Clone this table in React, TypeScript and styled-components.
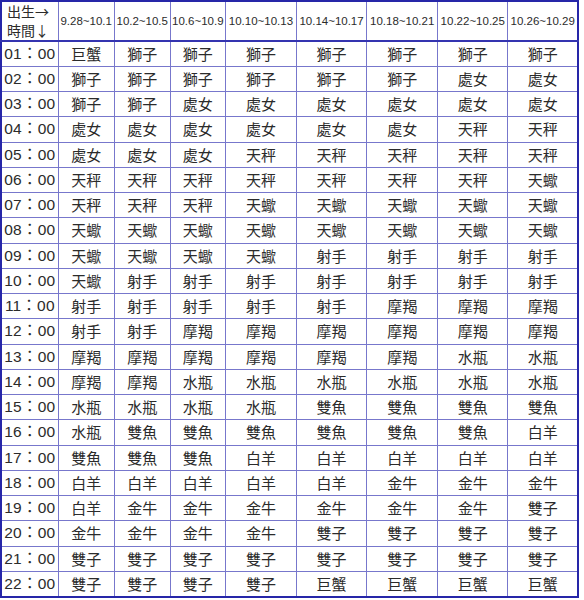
import styled, { createGlobalStyle } from "styled-components";

const GlobalStyle = createGlobalStyle`
  html, body {
    margin: 0;
    padding: 0;
    background: #ffffff;
  }
  body {
    font-family: "Liberation Sans", "Noto Sans CJK TC", sans-serif;
    color: #2b2b2b;
  }
`;

const Table = styled.table`
  table-layout: fixed;
  border-collapse: collapse;
  width: 579px;
  border: 2px solid #2626a8;
`;

const HeadRow = styled.tr`
  height: 39px;
  border-bottom: 2px solid #3434b0;
`;

const Row = styled.tr`
  height: 25.25px;
`;

const Cell = styled.td`
  border: 1px solid #7777cc;
  padding: 0;
  text-align: center;
  vertical-align: middle;
  font-family: "Noto Sans CJK TC", "Noto Sans CJK JP", sans-serif;
  font-weight: normal;
  font-size: 15px;
  line-height: 18px;
  color: #2b2b2b;
  white-space: nowrap;
  overflow: hidden;
`;

const TimeCell = styled(Cell)`
  font-family: "Liberation Sans", "Noto Sans CJK TC", sans-serif;
  font-size: 15.5px;
  letter-spacing: 0.2px;
`;

const CornerCell = styled(Cell)`
  text-align: left;
  padding-left: 5px;
`;

const CornerLine = styled.span`
  display: block;
  height: 19px;
  line-height: 19px;
  font-size: 14px;
  overflow: hidden;
`;

const DateCell = styled(Cell)`
  font-family: "Liberation Sans", sans-serif;
  font-size: 11.5px;
`;

const dates = [
  "9.28~10.1",
  "10.2~10.5",
  "10.6~10.9",
  "10.10~10.13",
  "10.14~10.17",
  "10.18~10.21",
  "10.22~10.25",
  "10.26~10.29",
];

const widths = [57, 56, 56, 55, 71, 70, 71, 70, 70];

const rows: string[] = [
  "巨蟹 獅子 獅子 獅子 獅子 獅子 獅子 獅子",
  "獅子 獅子 獅子 獅子 獅子 獅子 處女 處女",
  "獅子 獅子 處女 處女 處女 處女 處女 處女",
  "處女 處女 處女 處女 處女 處女 天秤 天秤",
  "處女 處女 處女 天秤 天秤 天秤 天秤 天秤",
  "天秤 天秤 天秤 天秤 天秤 天秤 天秤 天蠍",
  "天秤 天秤 天秤 天蠍 天蠍 天蠍 天蠍 天蠍",
  "天蠍 天蠍 天蠍 天蠍 天蠍 天蠍 天蠍 天蠍",
  "天蠍 天蠍 天蠍 天蠍 射手 射手 射手 射手",
  "天蠍 射手 射手 射手 射手 射手 射手 射手",
  "射手 射手 射手 射手 射手 摩羯 摩羯 摩羯",
  "射手 射手 摩羯 摩羯 摩羯 摩羯 摩羯 摩羯",
  "摩羯 摩羯 摩羯 摩羯 摩羯 摩羯 水瓶 水瓶",
  "摩羯 摩羯 水瓶 水瓶 水瓶 水瓶 水瓶 水瓶",
  "水瓶 水瓶 水瓶 水瓶 雙魚 雙魚 雙魚 雙魚",
  "水瓶 雙魚 雙魚 雙魚 雙魚 雙魚 雙魚 白羊",
  "雙魚 雙魚 雙魚 白羊 白羊 白羊 白羊 白羊",
  "白羊 白羊 白羊 白羊 白羊 金牛 金牛 金牛",
  "白羊 金牛 金牛 金牛 金牛 金牛 金牛 雙子",
  "金牛 金牛 金牛 金牛 雙子 雙子 雙子 雙子",
  "雙子 雙子 雙子 雙子 雙子 雙子 雙子 雙子",
  "雙子 雙子 雙子 雙子 巨蟹 巨蟹 巨蟹 巨蟹",
];

function hourLabel(i: number) {
  const h = String(i + 1).padStart(2, "0");
  return `${h}：00`;
}

export default function App() {
  return (
    <>
      <GlobalStyle />
      <Table>
        <colgroup>
          {widths.map((w, i) => (
            <col key={i} style={{ width: w }} />
          ))}
        </colgroup>
        <thead>
          <HeadRow>
            <CornerCell as="th">
              <CornerLine>出生→</CornerLine>
              <CornerLine>時間↓</CornerLine>
            </CornerCell>
            {dates.map((d) => (
              <DateCell as="th" key={d}>
                {d}
              </DateCell>
            ))}
          </HeadRow>
        </thead>
        <tbody>
          {rows.map((r, i) => (
            <Row key={i}>
              <TimeCell>{hourLabel(i)}</TimeCell>
              {r.split(" ").map((s, j) => (
                <Cell key={j}>{s}</Cell>
              ))}
            </Row>
          ))}
        </tbody>
      </Table>
    </>
  );
}
